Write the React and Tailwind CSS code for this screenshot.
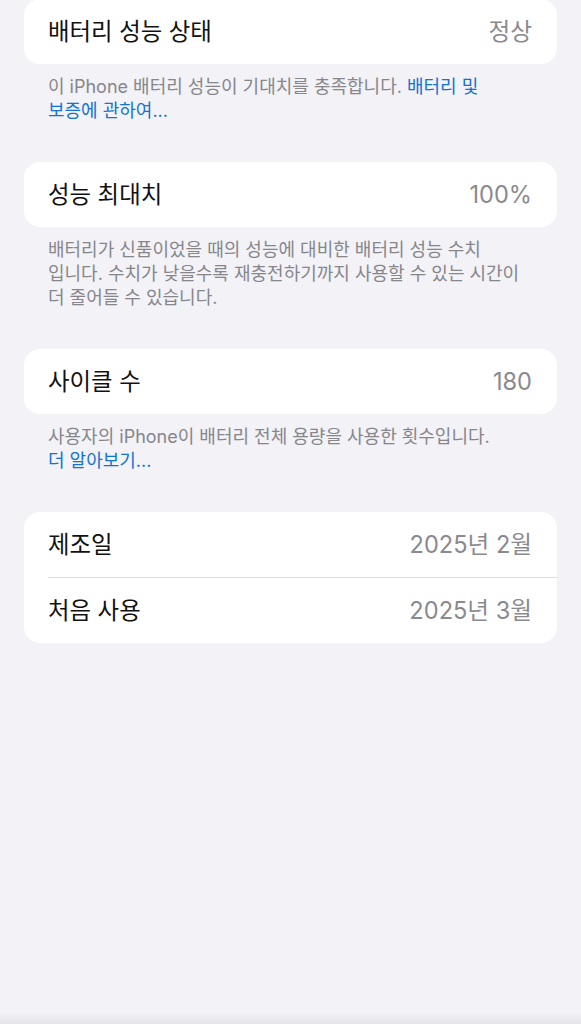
import React from 'react';

const font = { fontFamily: 'Inter, "Noto Sans CJK KR", sans-serif' };

const Row = ({ label, value }) => (
  <div className="flex h-[65px] items-center justify-between pr-[25px]">
    <span className="text-[23.4px] text-[#111111]">{label}</span>
    <span className="text-[23.6px] text-[#8a8a8e]">{value}</span>
  </div>
);

const Card = ({ children, className = '' }) => (
  <div className={`mx-[24px] rounded-[16px] bg-white pl-[24px] ${className}`}>{children}</div>
);

const Footer = ({ children }) => (
  <p className="px-[48px] pt-[11px] pb-[39px] text-[18px] leading-[24px] text-[#86868b]">{children}</p>
);

const Link = ({ children }) => <span className="text-[#1273d0]">{children}</span>;

export default function App() {
  return (
    <div className="flex h-[1024px] flex-col overflow-hidden bg-[#f2f2f7]" style={font}>
      <Card className="-mt-px">
        <Row label="배터리 성능 상태" value="정상" />
      </Card>
      <Footer>
        이 iPhone 배터리 성능이 기대치를 충족합니다. <Link>배터리 및<br />보증에 관하여...</Link>
      </Footer>

      <Card>
        <Row label="성능 최대치" value="100%" />
      </Card>
      <Footer>
        배터리가 신품이었을 때의 성능에 대비한 배터리 성능 수치<br />
        입니다. 수치가 낮을수록 재충전하기까지 사용할 수 있는 시간이<br />
        더 줄어들 수 있습니다.
      </Footer>

      <Card>
        <Row label="사이클 수" value="180" />
      </Card>
      <Footer>
        사용자의 iPhone이 배터리 전체 용량을 사용한 횟수입니다.<br />
        <Link>더 알아보기...</Link>
      </Footer>

      <Card>
        <Row label="제조일" value="2025년 2월" />
        <div className="h-px bg-[#dcdce0]" />
        <Row label="처음 사용" value="2025년 3월" />
      </Card>

      <div className="flex-1" />
      <div className="h-[12px] bg-gradient-to-b from-[#f2f2f7] to-[#e4e4e9]" />
    </div>
  );
}
